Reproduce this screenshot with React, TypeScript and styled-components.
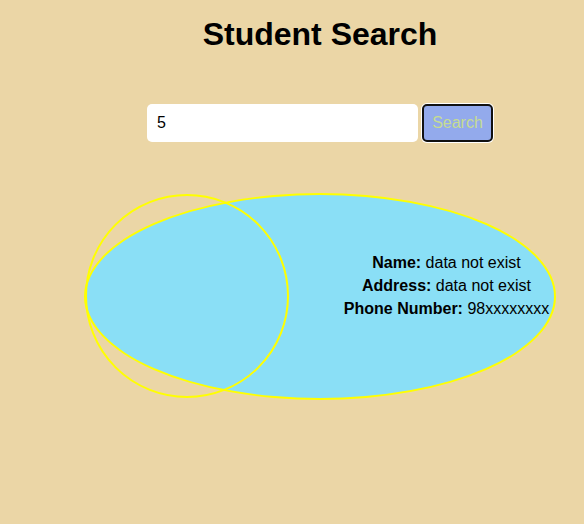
import React from "react";
import styled, { createGlobalStyle } from "styled-components";

const GlobalStyle = createGlobalStyle`
  html, body {
    margin: 0;
    padding: 0;
    background: #ebd6a6;
    font-family: "Liberation Sans", Arial, sans-serif;
  }
`;

const Page = styled.main`
  box-sizing: border-box;
  width: 584px;
  padding-left: 56px;
  display: flex;
  flex-direction: column;
  align-items: center;
`;

const Title = styled.h1`
  margin: 16px 0 0;
  font-size: 32px;
  font-weight: 700;
  line-height: normal;
  color: #000;
`;

const SearchRow = styled.form`
  margin-top: 51px;
  display: flex;
  align-items: center;
  gap: 4px;
`;

const SearchInput = styled.input`
  box-sizing: border-box;
  width: 271px;
  height: 38px;
  border: none;
  border-radius: 5px;
  background: #fff;
  padding: 0 10px;
  font-family: "Liberation Sans", Arial, sans-serif;
  font-size: 16px;
  color: #000;
  outline: none;
`;

const SearchButton = styled.button`
  box-sizing: border-box;
  width: 71px;
  height: 38px;
  border: 2px solid #111;
  border-radius: 5px;
  box-shadow: 0 0 0 1px #fff;
  background: #93aaec;
  color: #c6dc92;
  font-family: "Liberation Sans", Arial, sans-serif;
  font-size: 16px;
  padding: 0;
`;

const Card = styled.section`
  position: relative;
  box-sizing: border-box;
  margin-top: 51px;
  width: 472px;
  height: 207px;
  border: 2px solid #ffff00;
  border-radius: 50%;
  background: #8adff6;
  display: flex;
  align-items: flex-start;
  padding: 56px 0 0 253px;
`;

const Ring = styled.div`
  position: absolute;
  left: -1px;
  top: -1px;
  width: 204px;
  height: 204px;
  box-sizing: border-box;
  border: 2px solid #ffff00;
  border-radius: 50%;
`;

const Details = styled.div`
  width: 100%;
  text-align: center;
  font-size: 16px;
  line-height: 23px;
  color: #000;
  white-space: nowrap;
`;

const Line = styled.div``;

const Label = styled.b`
  font-weight: 700;
`;

export default function App() {
  return (
    <>
      <GlobalStyle />
      <Page>
        <Title>Student Search</Title>
        <SearchRow onSubmit={(e) => e.preventDefault()}>
          <SearchInput defaultValue="5" />
          <SearchButton type="submit">Search</SearchButton>
        </SearchRow>
        <Card>
          <Ring />
          <Details>
            <Line>
              <Label>Name:</Label> data not exist
            </Line>
            <Line>
              <Label>Address:</Label> data not exist
            </Line>
            <Line>
              <Label>Phone Number:</Label> 98xxxxxxxx
            </Line>
          </Details>
        </Card>
      </Page>
    </>
  );
}
